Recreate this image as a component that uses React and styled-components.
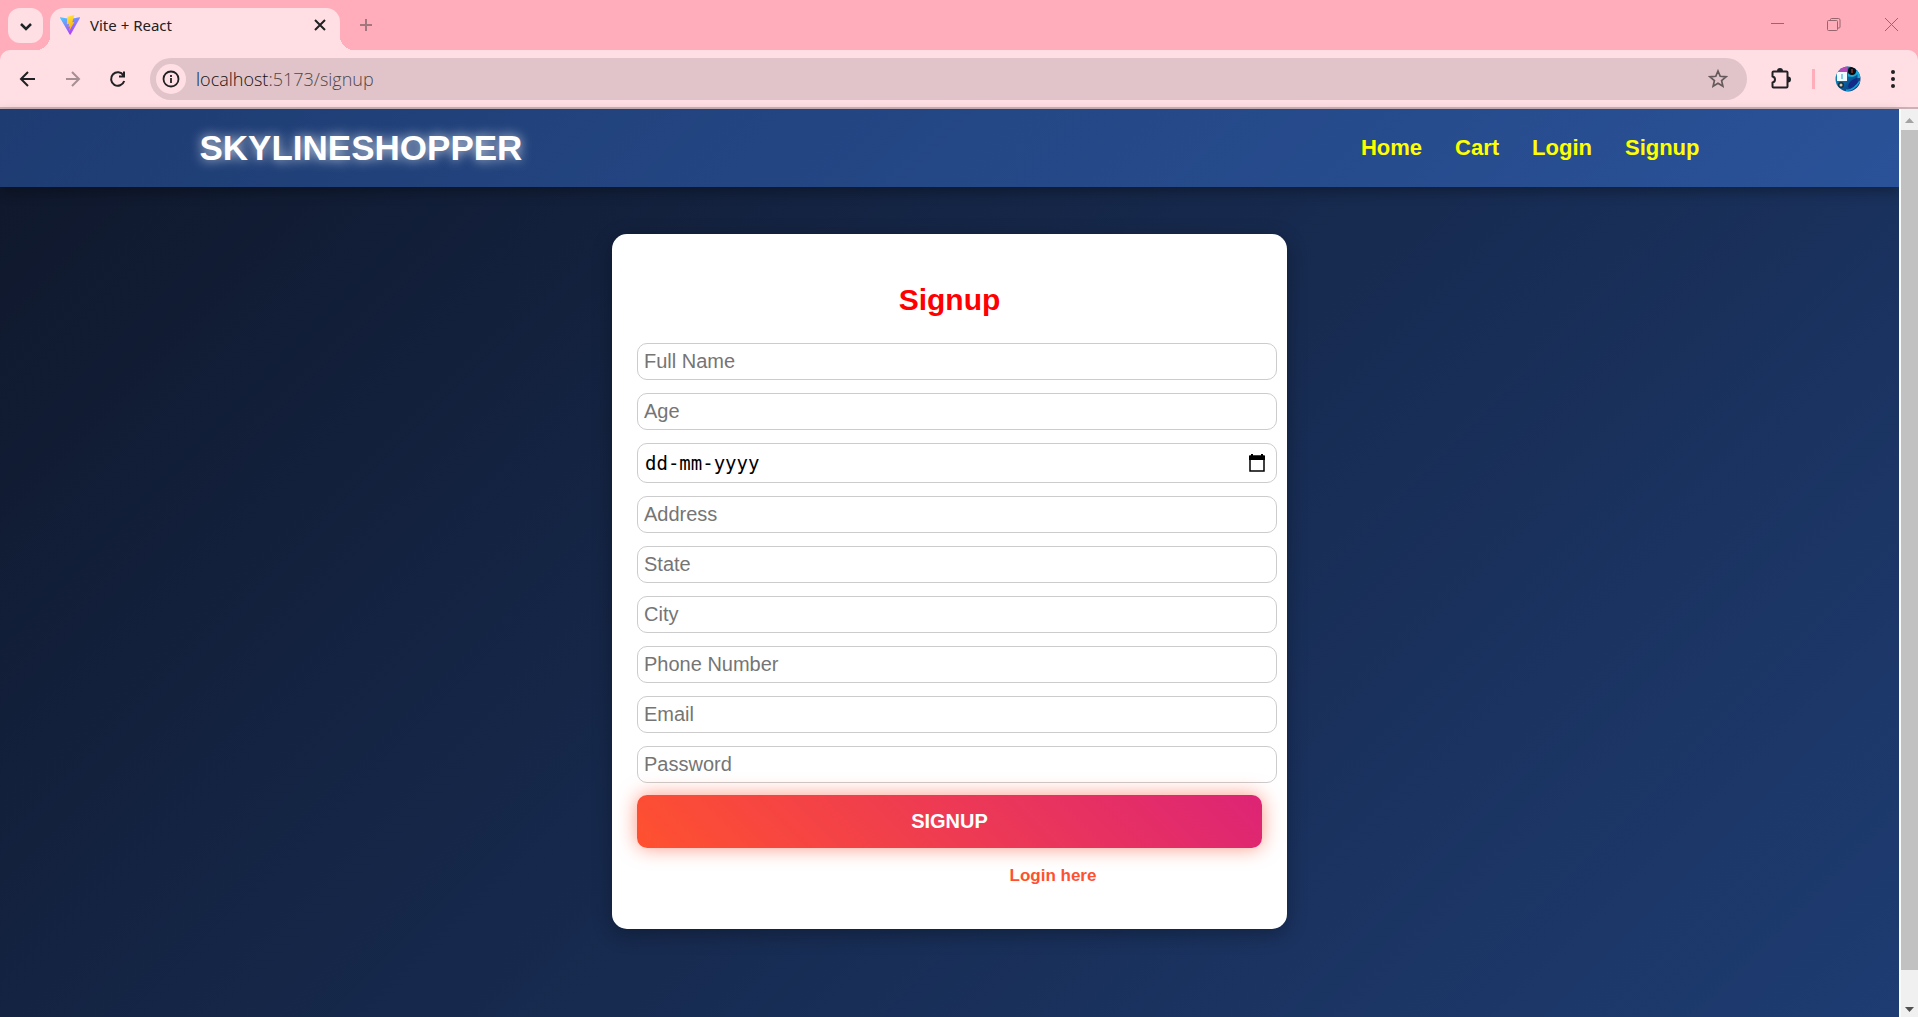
import React from 'react';
import styled, { createGlobalStyle } from 'styled-components';

const GlobalStyle = createGlobalStyle`
  * { box-sizing: border-box; }
  body { margin: 0; font-family: "Liberation Sans", Arial, sans-serif; overflow: hidden; }
`;

const Window = styled.div`
  display: flex;
  flex-direction: column;
  height: 100vh;
`;

const TabStrip = styled.header`
  display: flex;
  align-items: flex-start;
  height: 50px;
  padding-left: 8px;
  background: #ffadbb;
`;

const IconButton = styled.button`
  display: flex;
  align-items: center;
  justify-content: center;
  flex: none;
  width: ${(p) => p.$width || 35}px;
  height: ${(p) => p.$height || 35}px;
  padding: 0;
  border: 0;
  border-radius: ${(p) => p.$radius || 0}px;
  background: ${(p) => p.$fill || 'transparent'};
  color: ${(p) => p.$color || '#202124'};
`;

const TabSearch = styled(IconButton)`
  margin: 8px 7px 0 0;
`;

const Tab = styled.div`
  position: relative;
  display: flex;
  align-items: center;
  width: 290px;
  height: 42px;
  margin-top: 8px;
  padding: 0 10px 8px;
  border-radius: 14px 14px 0 0;
  background: #ffdfe4;
  &::before, &::after {
    content: "";
    position: absolute;
    bottom: 0;
    width: 14px;
    height: 14px;
  }
  &::before {
    left: -14px;
    background: radial-gradient(circle at 0 0, transparent 14px, #ffdfe4 14px);
  }
  &::after {
    right: -14px;
    background: radial-gradient(circle at 100% 0, transparent 14px, #ffdfe4 14px);
  }
`;

const TabTitle = styled.span`
  flex: 1;
  margin-left: 10px;
  font: 15px/20px "Noto Sans", sans-serif;
  color: #202124;
`;

const WindowControls = styled.div`
  display: flex;
  margin-left: auto;
`;

const Toolbar = styled.div`
  display: flex;
  align-items: center;
  height: 59px;
  padding: 0 8px;
  border-bottom: 2px solid #ccb2b6;
  border-radius: 10px 10px 0 0;
  background: #ffdfe4;
`;

const ToolbarBack = styled.div`
  background: #ffadbb;
`;

const NavButtons = styled.div`
  display: flex;
  gap: 5px;
  padding-right: 12px;
`;

const Omnibox = styled.div`
  display: flex;
  align-items: center;
  flex: 1;
  height: 42px;
  margin-right: 3px;
  padding: 0 10px 0 6px;
  border-radius: 21px;
  background: #e0c4c9;
`;

const Address = styled.div`
  flex: 1;
  margin-left: 10px;
  font: 300 18px/24px "Open Sans", "Noto Sans", sans-serif;
  color: #4f4649;
  b { font-weight: 300; color: #101114; }
`;

const Divider = styled.span`
  width: 3px;
  height: 20px;
  margin-right: 6px;
  background: #ffadbb;
`;

const Viewport = styled.div`
  display: flex;
  flex: 1;
  min-height: 0;
`;

const Page = styled.div`
  flex: 1;
  display: flex;
  flex-direction: column;
  background: linear-gradient(135deg, #0f172a, #1e3c72);
`;

const Navbar = styled.nav`
  background: linear-gradient(135deg, #1e3c72, #2a5298);
  box-shadow: 0 5px 12px rgba(0, 0, 0, 0.3);
`;

const NavInner = styled.div`
  display: flex;
  align-items: center;
  justify-content: space-between;
  max-width: 1500px;
  height: 78px;
  margin: 0 auto;
`;

const Brand = styled.a`
  font-size: 35px;
  font-weight: 700;
  color: #fff;
  text-decoration: none;
  text-shadow: 0 0 12px rgba(255, 255, 255, 0.8);
`;

const NavLinks = styled.div`
  display: flex;
  gap: 33px;
`;

const NavLink = styled.a`
  font-size: 22px;
  font-weight: 700;
  color: #ff0;
  text-decoration: none;
`;

const Card = styled.form`
  display: flex;
  flex-direction: column;
  width: 675px;
  margin: 47px auto 0;
  padding: 48px 25px 42px;
  border-radius: 15px;
  background: #fff;
  box-shadow: 0 5px 20px rgba(0, 0, 0, 0.3);
`;

const Title = styled.h2`
  margin: 0 0 26px;
  font-size: 30px;
  line-height: 35px;
  text-align: center;
  color: #f00;
`;

const Fields = styled.div`
  display: flex;
  flex-direction: column;
  gap: 13px;
  margin-right: -15px;
`;

const Field = styled.input`
  width: 100%;
  height: 37px;
  padding: 0 6px;
  border: 1px solid #ccc;
  border-radius: 10px;
  background: #fff;
  font: 20px "Liberation Sans", Arial, sans-serif;
  color: #000;
  &::placeholder { color: #757575; opacity: 1; }
`;

const DateBox = styled.div`
  display: flex;
  align-items: center;
  height: 40px;
  padding-right: 10px;
  border: 1px solid #ccc;
  border-radius: 10px;
`;

const DateInput = styled.input`
  flex: 1;
  min-width: 0;
  padding: 0 7px;
  border: 0;
  background: transparent;
  font: 19px "DejaVu Sans Mono", monospace;
  color: #000;
  &::placeholder { color: #000; opacity: 1; }
`;

const Submit = styled.button`
  height: 53px;
  margin-top: 12px;
  border: 0;
  border-radius: 10px;
  background: linear-gradient(45deg, #ff512f, #dd2476);
  box-shadow: 0 0 19px rgba(255, 81, 47, 0.6);
  font: 700 20px "Liberation Sans", Arial, sans-serif;
  color: #fff;
`;

const LoginRow = styled.p`
  margin: 17px 0 0;
  padding-left: 207px;
  font-size: 17px;
  line-height: 22px;
  text-align: center;
`;

const LoginLink = styled.a`
  font-weight: 700;
  color: #ff512f;
  text-decoration: none;
`;

const Scrollbar = styled.div`
  display: flex;
  flex-direction: column;
  width: 19px;
  border-left: 2px solid #fbfbfb;
  background: #f0f0f0;
`;

const Thumb = styled.div`
  flex: 1;
  background: #c1c1c1;
`;

const Arrow = styled.div`
  display: flex;
  align-items: flex-start;
  justify-content: center;
  height: ${(p) => p.$height}px;
  padding-top: ${(p) => p.$top}px;
`;

const Stroke = ({ size = 20, width = 2, children }) => (
  <svg width={size} height={size} viewBox="0 0 20 20" fill="none" stroke="currentColor" strokeWidth={width}>
    {children}
  </svg>
);

const ViteLogo = () => (
  <svg width="20" height="20" viewBox="0 0 32 32">
    <defs>
      <linearGradient id="v" x1="0" y1="0" x2="0.6" y2="1">
        <stop offset="0" stopColor="#41d1ff" />
        <stop offset="1" stopColor="#bd34fe" />
      </linearGradient>
      <linearGradient id="b" x1="0.4" y1="0" x2="0.6" y2="1">
        <stop offset="0" stopColor="#ffea83" />
        <stop offset="0.1" stopColor="#ffdd35" />
        <stop offset="1" stopColor="#ffa800" />
      </linearGradient>
    </defs>
    <path d="M31.9 4.8 17 31a.9.9 0 0 1-1.500 0L.1 4.800a.8.8 0 0 1 .9-1.200L16 6.300 31 3.600a.8.8 0 0 1 .9 1.200z" fill="url(#v)" />
    <path d="M23 .1 12 2.300a.4.4 0 0 0-.4.4l-.7 11.700a.4.4 0 0 0 .5.4l3.100-.7-.9 4.600 2.500-.5-1.400 7.300 8.200-14.500-3.300.6z" fill="url(#b)" />
  </svg>
);

const Avatar = () => (
  <svg width="26" height="26" viewBox="0 0 26 26">
    <defs>
      <clipPath id="disc"><circle cx="13" cy="13" r="12.500" /></clipPath>
      <linearGradient id="sea" x1="0" y1="0" x2="1" y2="1">
        <stop offset="0" stopColor="#1b9fc4" />
        <stop offset="0.5" stopColor="#08629f" />
        <stop offset="1" stopColor="#141d68" />
      </linearGradient>
    </defs>
    <g clipPath="url(#disc)">
      <rect width="26" height="26" fill="url(#sea)" />
      <path d="M3 0h10l-1 6H4z" fill="#b54bb8" />
      <path d="M13 9c3 0 4 1 6 0l5-4v7" stroke="#18a9d8" strokeWidth="3" fill="none" />
      <path d="M13 21c1-6 5-8 9-9l1 5-7 6z" fill="#142a86" />
      <path d="M11 24c5 1 10-3 14-9" stroke="#159fd2" strokeWidth="1.500" fill="none" />
      <rect x="2" y="6" width="10" height="9" fill="#f1fbff" />
      <path d="M7 8v5" stroke="#8fcfe4" strokeWidth="2" />
      <circle cx="17" cy="5" r="4" fill="#080b12" />
      <path d="M17 3v4" stroke="#c55132" />
      <circle cx="6" cy="19" r="3" fill="#16313a" />
      <circle cx="6" cy="19" r="1.500" fill="#d6c9b4" />
    </g>
  </svg>
);

const FIELDS_BEFORE = [['Full Name', 'text'], ['Age', 'number']];
const FIELDS_AFTER = [
  ['Address', 'text'], ['State', 'text'], ['City', 'text'],
  ['Phone Number', 'tel'], ['Email', 'email'], ['Password', 'password'],
];

const renderField = ([label, type]) => (
  <Field key={label} type={type} placeholder={label} aria-label={label} />
);

export default function App() {
  return (
    <>
      <GlobalStyle />
      <Window>
        <TabStrip>
          <TabSearch $fill="#ffdfe4" $radius={12} aria-label="Search tabs">
            <Stroke><path d="m5 8 5 5 5-5" strokeWidth="2.500" /></Stroke>
          </TabSearch>
          <Tab>
            <ViteLogo />
            <TabTitle>Vite + React</TabTitle>
            <IconButton $width={20} $height={20} aria-label="Close tab">
              <Stroke><path d="m5 5 10 10M15 5 5 15" /></Stroke>
            </IconButton>
          </Tab>
          <IconButton $width={52} $height={50} $color="#a27780" aria-label="New tab">
            <Stroke><path d="M10 4v12M4 10h12" /></Stroke>
          </IconButton>
          <WindowControls>
            <IconButton $width={57} $height={48} $color="#96656e" aria-label="Minimize">
              <Stroke width={1}><path d="M5 9.500h13" /></Stroke>
            </IconButton>
            <IconButton $width={57} $height={48} $color="#96656e" aria-label="Restore">
              <Stroke width={1}><rect x="4.500" y="6.500" width="10" height="10" rx="1" /><path d="M7.500 6V5.500q0-1 1-1h7q1.500 0 1.500 1.500v7q0 1-1 1h-1" /></Stroke>
            </IconButton>
            <IconButton $width={57} $height={48} $color="#96656e" aria-label="Close window">
              <Stroke width={1}><path d="m5 4 13 13M18 4 5 17" /></Stroke>
            </IconButton>
          </WindowControls>
        </TabStrip>
        <ToolbarBack>
          <Toolbar>
            <NavButtons>
              <IconButton $width={40} $height={40} aria-label="Back">
                <Stroke><path d="M17 10H4M10 3l-7 7 7 7" /></Stroke>
              </IconButton>
              <IconButton $width={40} $height={40} $color="#a58f93" aria-label="Forward">
                <Stroke><path d="M3 10h13M9 3l7 7-7 7" /></Stroke>
              </IconButton>
              <IconButton $width={40} $height={40} aria-label="Reload">
                <Stroke><path d="M15.500 6.500a6.700 6.700 0 1 0 .7 5.500M16 2.500V7.500h-5" /></Stroke>
              </IconButton>
            </NavButtons>
            <Omnibox>
              <IconButton $width={30} $height={30} $radius={15} $fill="#ffdfe4" aria-label="Site information">
                <Stroke width={1.8}><circle cx="10" cy="10" r="7.500" /><path d="M10 9v5M10 6v2" /></Stroke>
              </IconButton>
              <Address><b>localhost</b>:5173/signup</Address>
              <IconButton $width={38} $color="#66595c" aria-label="Bookmark this tab">
                <Stroke width={1.7}><path d="m10 2 2.200 5.300 5.800.5-4.400 3.800 1.300 5.600L10 14.200l-4.900 3 1.300-5.600L2 7.800l5.800-.5z" /></Stroke>
              </IconButton>
            </Omnibox>
            <IconButton $width={62} $height={40} aria-label="Extensions">
              <svg width="22" height="22" viewBox="0 0 22 22" fill="none" stroke="currentColor" strokeWidth="2" strokeLinejoin="round">
                <path d="M3.500 3.500h13q1 0 1 1v14q0 1-1 1h-13q-1 0-1-1v-4q2.500-.5 2.500-3T2.500 8.500v-4q0-1 1-1z" />
                <path d="M7 3q0-3 3-3t3 3zM18 8.500q3 0 3 3t-3 3z" fill="currentColor" stroke="none" />
              </svg>
            </IconButton>
            <Divider />
            <IconButton $width={54} $height={40} aria-label="Profile"><Avatar /></IconButton>
            <IconButton $width={35} $height={40} aria-label="Menu">
              <svg width="20" height="20" viewBox="0 0 20 20" fill="currentColor">
                <circle cx="10" cy="3" r="2" /><circle cx="10" cy="10" r="2" /><circle cx="10" cy="17" r="2" />
              </svg>
            </IconButton>
          </Toolbar>
        </ToolbarBack>
        <Viewport>
          <Page>
            <Navbar>
              <NavInner>
                <Brand href="#home">SKYLINESHOPPER</Brand>
                <NavLinks>
                  {['Home', 'Cart', 'Login', 'Signup'].map((name) => (
                    <NavLink key={name} href={`#${name.toLowerCase()}`}>{name}</NavLink>
                  ))}
                </NavLinks>
              </NavInner>
            </Navbar>
            <Card>
              <Title>Signup</Title>
              <Fields>
                {FIELDS_BEFORE.map(renderField)}
                <DateBox>
                  <DateInput type="text" placeholder="dd-mm-yyyy" aria-label="Date of birth" />
                  <svg width="18" height="18" viewBox="0 0 18 18">
                    <path d="M2 2h14v15H2z" fill="none" stroke="#000" strokeWidth="1.500" />
                    <path d="M1 2h16v4H1zM3 0h2v3H3zM13 0h2v3h-2z" />
                  </svg>
                </DateBox>
                {FIELDS_AFTER.map(renderField)}
              </Fields>
              <Submit type="button">SIGNUP</Submit>
              <LoginRow><LoginLink href="#login">Login here</LoginLink></LoginRow>
            </Card>
          </Page>
          <Scrollbar>
            <Arrow $height={21} $top={9}>
              <svg width="9" height="5" viewBox="0 0 9 5"><path d="M0 5 4.500 0 9 5z" fill="#a3a3a3" /></svg>
            </Arrow>
            <Thumb />
            <Arrow $height={47} $top={37}>
              <svg width="9" height="5" viewBox="0 0 9 5"><path d="M0 0 4.500 5 9 0z" fill="#505050" /></svg>
            </Arrow>
          </Scrollbar>
        </Viewport>
      </Window>
    </>
  );
}
